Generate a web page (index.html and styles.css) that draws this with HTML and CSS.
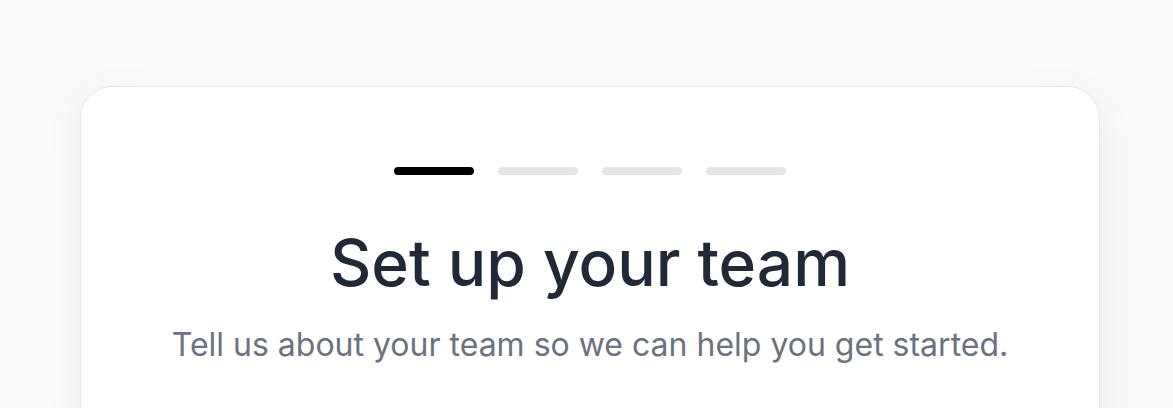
FILE: index.html
```html
<!DOCTYPE html>
<html lang="en">
<head>
    <meta charset="UTF-8">
    <meta name="viewport" content="width=device-width, initial-scale=1.0">
    <title>Set up your team</title>
    <link rel="stylesheet" href="styles.css">
</head>
<body>
    <div class="page">
        <div class="card">
            <div class="steps">
                <span class="step active"></span>
                <span class="step"></span>
                <span class="step"></span>
                <span class="step"></span>
            </div>
            <h1>Set up your team</h1>
            <p class="subtitle">Tell us about your team so we can help you get started.</p>
        </div>
    </div>
</body>
</html>
```

FILE: styles.css
```css
body {
    margin: 0;
    font-family: Inter, "Noto Sans", sans-serif;
    background-color: #f9fafb;
}
.page {
    padding: 86px 73px 0 80px;
}
.card {
    background-color: white;
    border: 1px solid #e5e7eb;
    border-radius: 32px;
    box-shadow: 0 10px 40px rgba(0, 0, 0, 0.06);
    padding: 80px 40px 80px;
    display: flex;
    flex-direction: column;
    align-items: center;
}
.steps {
    display: flex;
    gap: 24px;
}
.step {
    width: 80px;
    height: 8px;
    border-radius: 4px;
    background-color: #e5e5e5;
}
.step.active {
    background-color: #000;
}
h1 {
    margin: 50px 0 0;
    font-size: 64px;
    font-weight: 500;
    line-height: 1.2;
    color: #1f2937;
}
.subtitle {
    margin: 23px 0 0;
    font-size: 32px;
    color: #6b7280;
}
```
